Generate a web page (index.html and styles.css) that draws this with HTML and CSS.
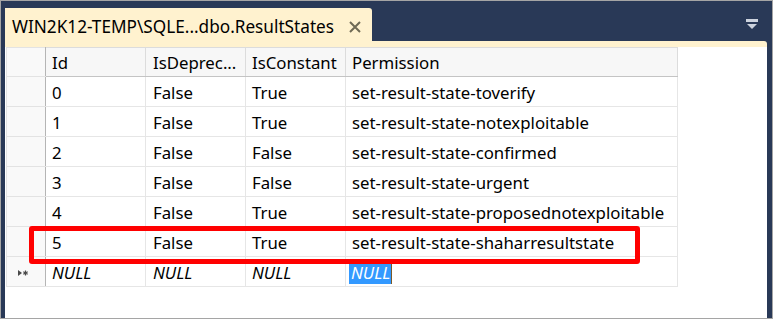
FILE: index.html
```html
<!DOCTYPE html>
<html>
<head>
<meta charset="utf-8">
<link rel="stylesheet" href="styles.css">
</head>
<body>
<div class="window">
  <div class="tabbar">
    <div class="tab">
      <span class="tab-title">WIN2K12-TEMP\SQLE...dbo.ResultStates</span>
      <svg class="tab-close" width="12" height="12" viewBox="0 0 12 12"><path d="M1 1 L11 11 M11 1 L1 11" stroke="#6f6a55" stroke-width="2" fill="none"/></svg>
    </div>
    <svg class="dropdown" width="12" height="11" viewBox="0 0 12 11"><rect x="0" y="0" width="12" height="3" fill="#cdd3de"/><path d="M1 5 L11 5 L6 10 Z" fill="#cdd3de"/></svg>
  </div>
  <div class="strip"></div>
  <div class="content">
    <table class="grid">
      <thead>
        <tr><th class="rh"></th><th>Id</th><th>IsDeprec...</th><th>IsConstant</th><th>Permission</th></tr>
      </thead>
      <tbody>
        <tr><td class="rh"></td><td>0</td><td>False</td><td>True</td><td>set-result-state-toverify</td></tr>
        <tr><td class="rh"></td><td>1</td><td>False</td><td>True</td><td>set-result-state-notexploitable</td></tr>
        <tr><td class="rh"></td><td>2</td><td>False</td><td>False</td><td>set-result-state-confirmed</td></tr>
        <tr><td class="rh"></td><td>3</td><td>False</td><td>False</td><td>set-result-state-urgent</td></tr>
        <tr><td class="rh"></td><td>4</td><td>False</td><td>True</td><td>set-result-state-proposednotexploitable</td></tr>
        <tr><td class="rh"></td><td>5</td><td>False</td><td>True</td><td>set-result-state-shaharresultstate</td></tr>
        <tr class="newrow"><td class="rh"><svg class="marker" width="10" height="6" viewBox="0 0 10 6"><path d="M0 0 L4 3 L0 6 Z" fill="#4a4a4a"/><path d="M7.5 0.5 L7.5 5.5 M5.3 1.8 L9.7 4.2 M9.7 1.8 L5.3 4.2" stroke="#4a4a4a" stroke-width="1.2"/></svg></td><td>NULL</td><td>NULL</td><td>NULL</td><td><span class="sel">NULL</span></td></tr>
      </tbody>
    </table>
    <div class="highlight"></div>
  </div>
</div>
</body>
</html>
```

FILE: styles.css
```css
* { box-sizing: border-box; }
html, body { margin: 0; padding: 0; background: #ffffff; }
body { width: 773px; height: 320px; overflow: hidden; font-family: "Noto Sans", "Open Sans", sans-serif; }

.window {
  width: 773px;
  height: 319px;
  border: 1px solid #a5a5a5;
  background: #293957;
  padding: 7px 5px 0 4px;
  display: flex;
  flex-direction: column;
}

.tabbar {
  height: 33px;
  display: flex;
  align-items: flex-start;
  justify-content: space-between;
}

.tab {
  width: 367px;
  height: 33px;
  background: #fff2cf;
  border-top-right-radius: 3px;
  display: flex;
  align-items: center;
  padding: 3px 0 0 7px;
}

.tab-title {
  font-size: 17.2px;
  color: #000000;
  white-space: nowrap;
}

.tab-close { margin-left: 15px; margin-top: 1px; }

.dropdown { margin-top: 11px; margin-right: 9px; }

.strip {
  height: 6px;
  background: #fff2cf;
  border-top-right-radius: 3px;
}

.content {
  height: 271px;
  background: #ffffff;
  position: relative;
  padding-left: 1px;
}

.grid {
  border-collapse: collapse;
  table-layout: fixed;
  font-size: 16.8px;
  color: #000000;
}

.grid th, .grid td {
  border: 1px solid #e6e6e6;
  padding: 0 0 0 6px;
  text-align: left;
  font-weight: normal;
  white-space: nowrap;
  overflow: visible;
}

.grid th {
  height: 29px;
  background: #f7f7f7;
  border-color: #dcdcdc;
  border-bottom: 1px solid #c4c4c4;
  padding-top: 1px;
}

.grid td { height: 30px; padding-top: 1px; }

.grid th:nth-child(1), .grid td:nth-child(1) { width: 39px; }
.grid th:nth-child(2), .grid td:nth-child(2) { width: 100px; }
.grid th:nth-child(3), .grid td:nth-child(3) { width: 100px; padding-left: 7px; }
.grid th:nth-child(4), .grid td:nth-child(4) { width: 100px; }
.grid th:nth-child(5), .grid td:nth-child(5) { width: 332px; }

.grid .rh {
  background: #f9f9f9;
  border-color: #e3e3e3;
  border-right: 1px solid #b5b5b5;
  padding-left: 4px;
}

.newrow td { font-style: italic; }

.marker { display: block; margin-left: 7px; margin-top: 1px; }

.sel {
  background: #3399ff;
  color: #ffffff;
  display: inline-block;
  padding: 0 1px 0 2px;
  margin-left: -3px;
  line-height: 22px;
  border-right: 1px solid #7a5a2a;
}

.highlight {
  position: absolute;
  left: 24px;
  top: 179px;
  width: 611px;
  height: 38px;
  border: 5px solid #ff0000;
  border-radius: 3px;
}
```
